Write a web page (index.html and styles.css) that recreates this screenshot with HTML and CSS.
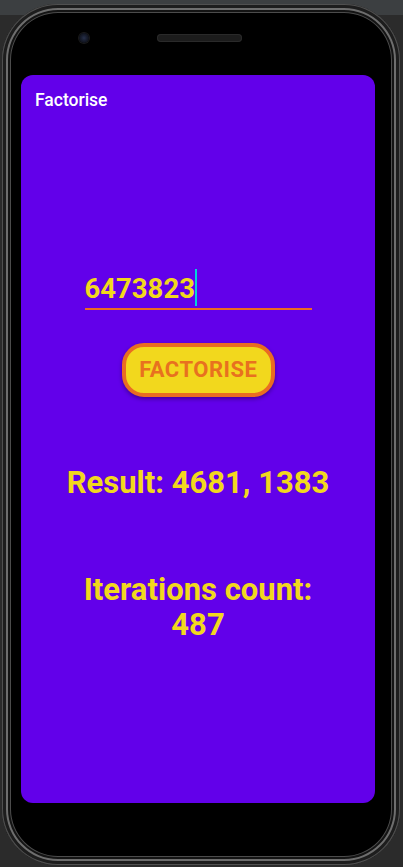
FILE: index.html
```html
<!DOCTYPE html>
<html>
<head>
<meta charset="utf-8">
<title>Factorise</title>
<link rel="stylesheet" href="styles.css">
</head>
<body>
<div class="phone">
  <div class="phone-top">
    <span class="camera"></span>
    <span class="speaker"></span>
  </div>
  <div class="screen">
    <div class="toolbar">Factorise</div>
    <div class="content">
      <div class="field">
        <span class="field-text">6473823</span>
        <span class="cursor"></span>
      </div>
      <div class="button">FACTORISE</div>
      <div class="result">Result: 4681, 1383</div>
      <div class="iterations">Iterations count:<br>487</div>
    </div>
  </div>
</div>
</body>
</html>
```

FILE: styles.css
```css
html, body {
  margin: 0;
  padding: 0;
}
body {
  width: 403px;
  height: 867px;
  overflow: hidden;
  background: linear-gradient(to bottom, #3c3f41 0, #3c3f41 15px, #2b2b2b 15px, #2b2b2b 100%);
  font-family: Roboto, "Liberation Sans", sans-serif;
}
.phone {
  box-sizing: border-box;
  width: 398px;
  height: 861px;
  margin: 4px 0 0 2px;
  border-radius: 56px;
  background: #000;
  box-shadow:
    inset 0 0 0 1px #505050,
    inset 0 0 0 4px #1d1d1d,
    inset 0 0 0 6px #6e6e6e,
    inset 0 0 0 8px #141414,
    inset 0 0 0 9px #4c4c4c;
  padding: 0 0 0 19px;
}
.phone-top {
  height: 71px;
  box-sizing: border-box;
  padding: 29px 0 0 58px;
  display: flex;
  align-items: flex-start;
}
.camera {
  width: 10px;
  height: 10px;
  border-radius: 50%;
  background: radial-gradient(circle at 50% 50%, #27304a 0, #161b2a 45%, #0b0b0f 100%);
  box-shadow: 0 0 0 1px #1a1a1a;
}
.speaker {
  width: 85px;
  height: 8px;
  margin: 1px 0 0 68px;
  border-radius: 4px;
  background: #1c1c1c;
  box-shadow: inset 0 0 0 1px #2a2a2a;
}
.screen {
  width: 354px;
  height: 728px;
  border-radius: 12px;
  background: #6200ea;
  overflow: hidden;
}
.toolbar {
  color: #ffffff;
  font-size: 17.5px;
  font-weight: 500;
  line-height: 20px;
  padding: 15px 0 0 14px;
  height: 48px;
  box-sizing: border-box;
}
.content {
  display: flex;
  flex-direction: column;
  align-items: center;
}
.field {
  width: 227px;
  margin-top: 150px;
  display: flex;
  align-items: flex-start;
  padding-bottom: 2px;
  border-bottom: 2px solid #ec6a22;
}
.field-text {
  color: #f2d81d;
  font-size: 27.5px;
  font-weight: 700;
  line-height: 32px;
}
.cursor {
  width: 2px;
  height: 37px;
  margin-top: -4px;
  background: #03d4d8;
}
.button {
  box-sizing: border-box;
  width: 153px;
  height: 54px;
  margin-top: 33px;
  border: 4px solid #ea6c22;
  border-radius: 22px;
  background: #f2d81d;
  color: #e8711f;
  font-size: 22px;
  font-weight: 700;
  line-height: 46px;
  letter-spacing: 0.5px;
  text-indent: 0.5px;
  text-align: center;
  box-shadow: 0 2px 4px rgba(0, 0, 0, 0.35);
}
.result {
  margin-top: 68px;
  color: #f2d81d;
  font-size: 31px;
  font-weight: 700;
  line-height: 36px;
  text-align: center;
}
.iterations {
  margin-top: 71px;
  color: #f2d81d;
  font-size: 31px;
  font-weight: 700;
  line-height: 35px;
  text-align: center;
}
```
